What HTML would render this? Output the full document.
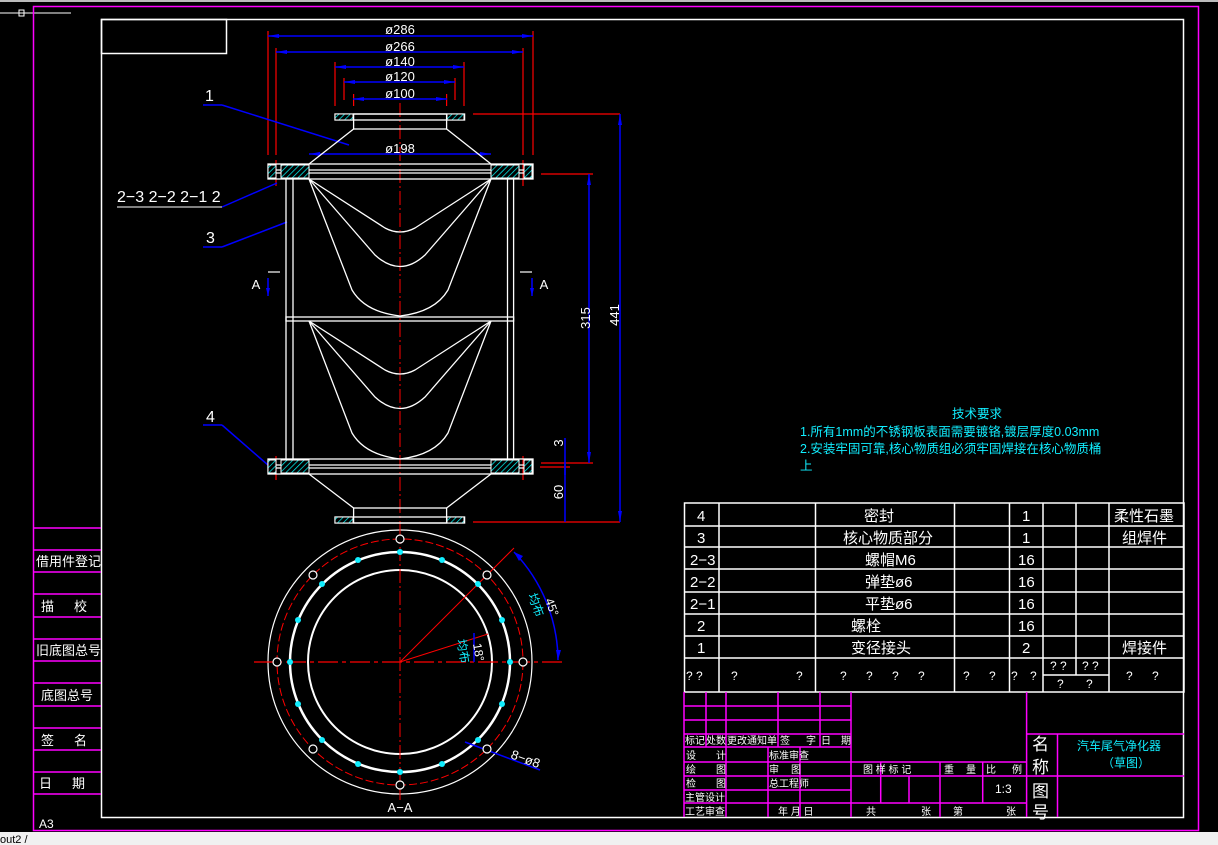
<!DOCTYPE html>
<html><head><meta charset="utf-8"><style>
html,body{margin:0;padding:0;background:#000;width:1218px;height:845px;overflow:hidden}
svg{display:block}
text{font-family:"Liberation Sans","Noto Sans CJK SC",sans-serif}
</style></head><body>
<svg width="1218" height="845" viewBox="0 0 1218 845" xmlns="http://www.w3.org/2000/svg">
<defs>
<pattern id="h" width="4" height="4" patternUnits="userSpaceOnUse" patternTransform="rotate(45)">
<rect width="4" height="4" fill="#000"/><line x1="0" y1="0" x2="0" y2="4" stroke="#0ff" stroke-width="1.4"/></pattern>
</defs>
<rect x="0" y="0" width="1218" height="2" fill="#bbb"/>
<rect x="0" y="832" width="1218" height="13" fill="#f0f0f0"/>
<text x="0" y="843" font-size="11" fill="#000">out2 /</text>
<!-- top-left marker -->
<line x1="0" y1="13" x2="71" y2="13" stroke="#fff"/>
<rect x="19" y="10" width="5" height="6" fill="none" stroke="#fff"/>
<!-- borders -->
<rect x="33.5" y="6.5" width="1165" height="824" fill="none" stroke="#f0f" stroke-width="1.5"/>
<rect x="101.5" y="19.5" width="1082" height="798" fill="none" stroke="#fff" stroke-width="1.5"/>
<rect x="101.5" y="19.5" width="125" height="34" fill="none" stroke="#fff" stroke-width="1.5"/>
<!-- left column -->
<g stroke="#f0f" stroke-width="1.5">
<line x1="33" y1="528" x2="101" y2="528"/><line x1="33" y1="550" x2="101" y2="550"/><line x1="33" y1="572" x2="101" y2="572"/>
<line x1="33" y1="594" x2="101" y2="594"/><line x1="33" y1="617" x2="101" y2="617"/><line x1="33" y1="639" x2="101" y2="639"/>
<line x1="33" y1="661" x2="101" y2="661"/><line x1="33" y1="683" x2="101" y2="683"/><line x1="33" y1="706" x2="101" y2="706"/>
<line x1="33" y1="728" x2="101" y2="728"/><line x1="33" y1="750" x2="101" y2="750"/><line x1="33" y1="772" x2="101" y2="772"/>
<line x1="33" y1="794" x2="101" y2="794"/>
</g>
<g fill="#fff" font-size="13">
<text x="36" y="566">借用件登记</text>
<text x="41" y="611">描</text><text x="74" y="611">校</text>
<text x="36" y="655">旧底图总号</text>
<text x="41" y="700">底图总号</text>
<text x="41" y="745">签</text><text x="74" y="745">名</text>
<text x="39" y="788">日</text><text x="72" y="788">期</text>
<text x="39" y="828" font-size="12">A3</text>
</g>
<!-- parts table -->
<g stroke="#fff" stroke-width="1.5" fill="none">
<rect x="684.5" y="503" width="499.5" height="189"/>
<line x1="684" y1="526" x2="1184" y2="526"/><line x1="684" y1="547" x2="1184" y2="547"/><line x1="684" y1="569" x2="1184" y2="569"/>
<line x1="684" y1="592" x2="1184" y2="592"/><line x1="684" y1="614" x2="1184" y2="614"/><line x1="684" y1="636" x2="1184" y2="636"/>
<line x1="684" y1="658" x2="1184" y2="658"/><line x1="1043" y1="675" x2="1109" y2="675"/>
<line x1="719" y1="503" x2="719" y2="692"/><line x1="815.5" y1="503" x2="815.5" y2="692"/><line x1="954.5" y1="503" x2="954.5" y2="692"/>
<line x1="1009.5" y1="503" x2="1009.5" y2="692"/><line x1="1043" y1="503" x2="1043" y2="692"/><line x1="1076" y1="503" x2="1076" y2="675"/>
<line x1="1109" y1="503" x2="1109" y2="692"/>
</g>
<g fill="#fff" font-size="15">
<text x="697" y="521">4</text><text x="697" y="543">3</text><text x="690" y="565">2−3</text><text x="690" y="587">2−2</text><text x="690" y="609">2−1</text>
<text x="697" y="631">2</text><text x="697" y="653">1</text>
<text x="864" y="521">密封</text><text x="843" y="543">核心物质部分</text><text x="865" y="565">螺帽M6</text>
<text x="865" y="587">弹垫ø6</text><text x="865" y="609">平垫ø6</text><text x="851" y="631">螺栓</text><text x="851" y="653">变径接头</text>
<text x="1022" y="521">1</text><text x="1022" y="543">1</text><text x="1018" y="565">16</text><text x="1018" y="587">16</text>
<text x="1018" y="609">16</text><text x="1018" y="631">16</text><text x="1022" y="653">2</text>
<text x="1114" y="521">柔性石墨</text><text x="1122" y="543">组焊件</text><text x="1122" y="653">焊接件</text>
</g>
<g fill="#fff" font-size="12">
<text x="686" y="680">? ?</text><text x="731" y="680">?</text><text x="796" y="680">?</text>
<text x="840" y="680">?</text><text x="866" y="680">?</text><text x="892" y="680">?</text><text x="918" y="680">?</text>
<text x="963" y="680">?</text><text x="989" y="680">?</text><text x="1011" y="680">?</text><text x="1030" y="680">?</text>
<text x="1050" y="670">? ?</text><text x="1082" y="670">? ?</text><text x="1057" y="688">?</text><text x="1086" y="688">?</text>
<text x="1126" y="680">?</text><text x="1152" y="680">?</text>
</g>
<!-- title block -->
<g stroke="#f0f" stroke-width="1.5" fill="none">
<line x1="684" y1="692" x2="684" y2="817"/>
<line x1="684" y1="706" x2="851" y2="706"/><line x1="684" y1="720" x2="851" y2="720"/><line x1="684" y1="734" x2="851" y2="734"/>
<line x1="684" y1="747" x2="851" y2="747"/><line x1="684" y1="762" x2="1026" y2="762"/><line x1="684" y1="776" x2="1184" y2="776"/>
<line x1="684" y1="790" x2="851" y2="790"/><line x1="684" y1="803" x2="1026" y2="803"/>
<line x1="706" y1="692" x2="706" y2="747"/><line x1="726" y1="692" x2="726" y2="817"/><line x1="778" y1="692" x2="778" y2="747"/>
<line x1="820" y1="692" x2="820" y2="747"/><line x1="851" y1="692" x2="851" y2="817"/>
<line x1="768" y1="747" x2="768" y2="817"/><line x1="800" y1="747" x2="800" y2="817"/>
<line x1="880.7" y1="762" x2="880.7" y2="803"/><line x1="909" y1="776" x2="909" y2="803"/><line x1="940" y1="762" x2="940" y2="817"/>
<line x1="982.7" y1="762" x2="982.7" y2="803"/>
<line x1="1026.6" y1="692" x2="1026.6" y2="817"/><line x1="1026" y1="734" x2="1184" y2="734"/><line x1="1057.5" y1="734" x2="1057.5" y2="817"/>
</g>
<g fill="#fff" font-size="10">
<text x="685" y="744">标记</text><text x="706" y="744">处数</text><text x="727" y="744">更改通知单</text><text x="780" y="744">签</text><text x="806" y="744">字</text><text x="821" y="744">日</text><text x="841" y="744">期</text>
<text x="686" y="759">设</text><text x="716" y="759">计</text><text x="769" y="759">标准审查</text>
<text x="686" y="773">绘</text><text x="716" y="773">图</text><text x="769" y="773">审</text><text x="791" y="773">图</text>
<text x="686" y="787">检</text><text x="716" y="787">图</text><text x="769" y="787">总工程师</text>
<text x="685" y="801">主管设计</text><text x="685" y="815">工艺审查</text><text x="778" y="815">年 月 日</text>
<text x="863" y="773">图 样 标 记</text><text x="944" y="773">重</text><text x="966" y="773">量</text><text x="986" y="773">比</text><text x="1012" y="773">例</text>
<text x="866" y="815">共</text><text x="921" y="815">张</text><text x="953" y="815">第</text><text x="1006" y="815">张</text>
<text x="995" y="793" font-size="12">1:3</text>
</g>
<g fill="#fff" font-size="17"><text x="1032" y="750">名</text><text x="1032" y="773">称</text><text x="1032" y="797">图</text><text x="1032" y="818">号</text></g>
<g fill="#1ef" font-size="12"><text x="1077" y="750">汽车尾气净化器</text><text x="1102" y="767">（草图）</text></g>
<!-- tech req -->
<g fill="#1ef" font-size="12.5">
<text x="952" y="418">技术要求</text>
<text x="800" y="436">1.所有1mm的不锈钢板表面需要镀铬,镀层厚度0.03mm</text>
<text x="800" y="453">2.安装牢固可靠,核心物质组必须牢固焊接在核心物质桶</text>
<text x="800" y="470">上</text>
</g>
<!-- centerline -->
<line x1="400" y1="103" x2="400" y2="532" stroke="#f00" stroke-dasharray="14,3,2,3"/>
<!-- dimension ext lines red -->
<g stroke="#f00" stroke-width="1.2">
<line x1="268" y1="31" x2="268" y2="155"/><line x1="533" y1="31" x2="533" y2="155"/>
<line x1="276" y1="48" x2="276" y2="155"/><line x1="523" y1="48" x2="523" y2="155"/>
<line x1="335" y1="62" x2="335" y2="106"/><line x1="464" y1="62" x2="464" y2="106"/>
<line x1="344" y1="78" x2="344" y2="100"/><line x1="455" y1="78" x2="455" y2="100"/>
<line x1="353.6" y1="94" x2="353.6" y2="106"/><line x1="446.6" y1="94" x2="446.6" y2="106"/>
<line x1="473" y1="114" x2="620" y2="114"/><line x1="541" y1="174" x2="593" y2="174"/><line x1="541" y1="463" x2="593" y2="463"/>
<line x1="473" y1="522" x2="620" y2="522"/><line x1="540" y1="467" x2="570" y2="467"/>
<line x1="276" y1="160" x2="276" y2="186"/><line x1="523" y1="160" x2="523" y2="186"/>
<line x1="276" y1="456" x2="276" y2="480"/><line x1="523" y1="456" x2="523" y2="480"/>
</g>
<!-- blue dims -->
<g stroke="#00f" stroke-width="1.5" fill="#00f">
<line x1="268" y1="36" x2="533" y2="36"/><line x1="276" y1="52" x2="523" y2="52"/>
<line x1="335" y1="67" x2="464" y2="67"/><line x1="344" y1="82" x2="455" y2="82"/>
<line x1="353" y1="99" x2="447" y2="99"/><line x1="309" y1="154" x2="491" y2="154"/>
<line x1="589" y1="174" x2="589" y2="463"/><line x1="620" y1="114" x2="620" y2="522"/>
<line x1="565" y1="438" x2="565" y2="475"/>
<line x1="565" y1="463" x2="565" y2="522"/>
<line x1="203" y1="105" x2="222" y2="105"/><line x1="222" y1="105" x2="349" y2="145"/>
<line x1="222" y1="207" x2="277" y2="183"/>
<line x1="203" y1="247" x2="222" y2="247"/><line x1="222" y1="247" x2="287" y2="222"/>
<line x1="203" y1="425" x2="222" y2="425"/><line x1="222" y1="425" x2="268" y2="465"/>
<line x1="268" y1="278" x2="268" y2="296"/><line x1="532" y1="278" x2="532" y2="296"/>
</g>
<g fill="#00f">
<polygon points="268,36 279,34 279,38"/><polygon points="533,36 522,34 522,38"/>
<polygon points="276,52 287,50 287,54"/><polygon points="523,52 512,50 512,54"/>
<polygon points="335,67 346,65 346,69"/><polygon points="464,67 453,65 453,69"/>
<polygon points="344,82 355,80 355,84"/><polygon points="455,82 444,80 444,84"/>
<polygon points="353,99 364,97 364,101"/><polygon points="447,99 436,97 436,101"/>
<polygon points="309,154 320,152 320,156"/><polygon points="491,154 480,152 480,156"/>
<polygon points="589,174 587,185 591,185"/><polygon points="589,463 587,452 591,452"/>
<polygon points="620,114 618,125 622,125"/><polygon points="620,522 618,511 622,511"/>
<polygon points="268,296 266,288 270,288"/><polygon points="532,296 530,288 534,288"/>
</g>
<g stroke="#fff" stroke-width="1.2"><line x1="268" y1="272" x2="280" y2="272"/><line x1="520" y1="272" x2="532" y2="272"/></g>
<!-- dim texts -->
<g fill="#fff" font-size="13" text-anchor="middle">
<text x="400" y="34">ø286</text><text x="400" y="51">ø266</text><text x="400" y="66">ø140</text>
<text x="400" y="81">ø120</text><text x="400" y="98">ø100</text><text x="400" y="153">ø198</text>
<text x="256" y="289">A</text><text x="544" y="289">A</text>
<text x="400" y="812">A−A</text>
<text transform="translate(590,318) rotate(-90)">315</text>
<text transform="translate(619,315) rotate(-90)">441</text>
<text transform="translate(563,443) rotate(-90)">3</text>
<text transform="translate(563,492) rotate(-90)">60</text>
</g>
<g fill="#fff" font-size="16"><text x="205" y="101">1</text><text x="117" y="202">2−3 2−2 2−1 2</text><text x="206" y="243">3</text><text x="206" y="422">4</text></g>
<line x1="117" y1="207" x2="222" y2="207" stroke="#fff"/>
<!-- main body -->
<g stroke="#fff" stroke-width="1.3" fill="none">
<rect x="335" y="114" width="129.6" height="6"/>
<rect x="353.6" y="114" width="93" height="15"/>
<line x1="353.6" y1="129" x2="309" y2="164"/><line x1="446.6" y1="129" x2="491" y2="164"/>
<rect x="268" y="164" width="265" height="15"/>
<line x1="268" y1="170" x2="533" y2="170"/><line x1="268" y1="173" x2="533" y2="173"/>
<line x1="286" y1="179" x2="286" y2="459"/><line x1="293" y1="179" x2="293" y2="459"/>
<line x1="507.5" y1="179" x2="507.5" y2="459"/><line x1="513.6" y1="179" x2="513.6" y2="459"/>
<rect x="286" y="317" width="227.6" height="4"/>
<rect x="268" y="459" width="265" height="15"/>
<line x1="268" y1="465" x2="533" y2="465"/><line x1="268" y1="468" x2="533" y2="468"/>
<line x1="309" y1="474" x2="353.6" y2="508"/><line x1="491" y1="474" x2="446.6" y2="508"/>
<rect x="353.6" y="508" width="93" height="15"/>
<rect x="335" y="517" width="129.6" height="6"/>
<!-- curves top -->
<path d="M309,179 L385,228 Q400,236 415,228 L491,179"/>
<path d="M309,179 L375,255 Q400,278 425,255 L491,179"/>
<path d="M309,179 L352,290 Q365,312 400,316 Q435,312 448,290 L491,179"/>
<path d="M309,321 L385,370 Q400,378 415,370 L491,321"/>
<path d="M309,321 L375,397 Q400,420 425,397 L491,321"/>
<path d="M309,321 L352,433 Q365,455 400,459 Q435,455 448,433 L491,321"/>
</g>
<g fill="url(#h)" stroke="#fff" stroke-width="1">
<rect x="281" y="165" width="28" height="13"/><rect x="491" y="165" width="28" height="13"/>
<rect x="281" y="460" width="28" height="13"/><rect x="491" y="460" width="28" height="13"/>
<rect x="268" y="165" width="8" height="13"/><rect x="524" y="165" width="8" height="13"/>
<rect x="268" y="460" width="8" height="13"/><rect x="524" y="460" width="8" height="13"/>
<rect x="335" y="114" width="18" height="6"/><rect x="447" y="114" width="17" height="6"/>
<rect x="335" y="517" width="18" height="6"/><rect x="447" y="517" width="17" height="6"/>
</g>
<!-- circle view -->
<g fill="none">
<circle cx="400" cy="662" r="132" stroke="#fff" stroke-width="1.2"/>
<circle cx="400" cy="662" r="123" stroke="#f00" stroke-dasharray="8,3"/>
<circle cx="400" cy="662" r="110" stroke="#fff" stroke-width="2.5"/>
<circle cx="400" cy="662" r="92" stroke="#fff" stroke-width="2"/>
<line x1="254" y1="662" x2="562" y2="662" stroke="#f00" stroke-width="1.3" stroke-dasharray="20,4,4,4"/>
<line x1="400" y1="525" x2="400" y2="800" stroke="#f00" stroke-dasharray="14,3,2,3"/>
<line x1="400" y1="662" x2="514" y2="548" stroke="#f00"/>
<line x1="400" y1="662" x2="488" y2="634" stroke="#f00"/>
<path d="M514,552 A158,158 0 0 1 558,660" stroke="#00f" stroke-width="1.5"/>
<line x1="465" y1="742" x2="540" y2="770" stroke="#00f" stroke-width="1.5"/>
<line x1="474" y1="633" x2="474" y2="662" stroke="#00f" stroke-width="1.5"/>
</g>
<polygon points="514,552 523,556 519,561" fill="#00f"/><polygon points="558,660 556,650 561,650" fill="#00f"/>
<g stroke="#fff" stroke-width="1.2" fill="#000">
<circle cx="523" cy="662" r="4"/><circle cx="487" cy="575" r="4"/><circle cx="400" cy="539" r="4"/><circle cx="313" cy="575" r="4"/>
<circle cx="277" cy="662" r="4"/><circle cx="313" cy="749" r="4"/><circle cx="400" cy="785" r="4"/><circle cx="487" cy="749" r="4"/>
</g>
<g fill="#1ef">
<circle cx="510" cy="662" r="3"/><circle cx="502" cy="620" r="3"/><circle cx="478" cy="584" r="3"/><circle cx="442" cy="560" r="3"/>
<circle cx="400" cy="552" r="3"/><circle cx="358" cy="560" r="3"/><circle cx="322" cy="584" r="3"/><circle cx="298" cy="620" r="3"/>
<circle cx="290" cy="662" r="3"/><circle cx="298" cy="704" r="3"/><circle cx="322" cy="740" r="3"/><circle cx="358" cy="764" r="3"/>
<circle cx="400" cy="772" r="3"/><circle cx="442" cy="764" r="3"/><circle cx="478" cy="740" r="3"/><circle cx="502" cy="704" r="3"/>
</g>
<g font-size="12">
<text transform="translate(545,600) rotate(70)" fill="#fff">45°</text>
<text transform="translate(528,595) rotate(70)" fill="#1ef">均布</text>
<text transform="translate(473,644) rotate(80)" fill="#fff">18°</text>
<text transform="translate(457,640) rotate(80)" fill="#1ef">均布</text>
<text transform="translate(510,758) rotate(20)" fill="#fff" font-size="13">8−ø8</text>
</g>
</svg>
</body></html>
